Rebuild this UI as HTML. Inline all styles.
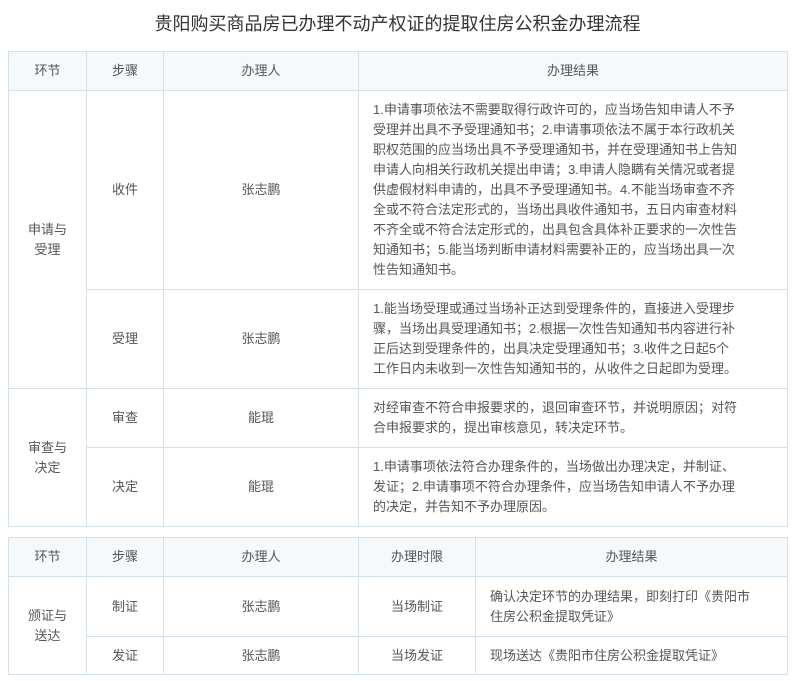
<!DOCTYPE html>
<html><head><meta charset="utf-8"><style>
body{margin:0;width:795px;height:681px;background:#fff;font-family:"Liberation Sans","Noto Sans CJK SC",sans-serif;color:#555;font-size:13px;position:relative;overflow:hidden}
.t{position:absolute;left:0;width:795px;top:11px;text-align:center;font-size:18px;color:#333;line-height:26px}
.c{position:absolute;box-sizing:border-box;border:1px solid #d5e1ea;display:flex;align-items:center;justify-content:center;text-align:center;line-height:20px;margin:0 -1px -1px 0}
.h{background:#f6f9fc}
.l{justify-content:flex-start;text-align:left;padding:0 14px}
</style></head><body>
<div class="t">贵阳购买商品房已办理不动产权证的提取住房公积金办理流程</div>

<div class="c h" style="left:8px;top:51px;width:79px;height:40px">环节</div>
<div class="c h" style="left:86px;top:51px;width:78px;height:40px">步骤</div>
<div class="c h" style="left:163px;top:51px;width:196px;height:40px">办理人</div>
<div class="c h" style="left:358px;top:51px;width:430px;height:40px">办理结果</div>

<div class="c" style="left:8px;top:90px;width:79px;height:299px">申请与<br>受理</div>
<div class="c" style="left:86px;top:90px;width:78px;height:200px">收件</div>
<div class="c" style="left:163px;top:90px;width:196px;height:200px">张志鹏</div>
<div class="c l" style="left:358px;top:90px;width:430px;height:200px">1.申请事项依法不需要取得行政许可的，应当场告知申请人不予<br>受理并出具不予受理通知书；2.申请事项依法不属于本行政机关<br>职权范围的应当场出具不予受理通知书，并在受理通知书上告知<br>申请人向相关行政机关提出申请；3.申请人隐瞒有关情况或者提<br>供虚假材料申请的，出具不予受理通知书。4.不能当场审查不齐<br>全或不符合法定形式的，当场出具收件通知书，五日内审查材料<br>不齐全或不符合法定形式的，出具包含具体补正要求的一次性告<br>知通知书；5.能当场判断申请材料需要补正的，应当场出具一次<br>性告知通知书。</div>

<div class="c" style="left:86px;top:289px;width:78px;height:100px">受理</div>
<div class="c" style="left:163px;top:289px;width:196px;height:100px">张志鹏</div>
<div class="c l" style="left:358px;top:289px;width:430px;height:100px">1.能当场受理或通过当场补正达到受理条件的，直接进入受理步<br>骤，当场出具受理通知书；2.根据一次性告知通知书内容进行补<br>正后达到受理条件的，出具决定受理通知书；3.收件之日起5个<br>工作日内未收到一次性告知通知书的，从收件之日起即为受理。</div>

<div class="c" style="left:8px;top:388px;width:79px;height:139px">审查与<br>决定</div>
<div class="c" style="left:86px;top:388px;width:78px;height:60px">审查</div>
<div class="c" style="left:163px;top:388px;width:196px;height:60px">能琨</div>
<div class="c l" style="left:358px;top:388px;width:430px;height:60px">对经审查不符合申报要求的，退回审查环节，并说明原因；对符<br>合申报要求的，提出审核意见，转决定环节。</div>
<div class="c" style="left:86px;top:447px;width:78px;height:80px">决定</div>
<div class="c" style="left:163px;top:447px;width:196px;height:80px">能琨</div>
<div class="c l" style="left:358px;top:447px;width:430px;height:80px">1.申请事项依法符合办理条件的，当场做出办理决定，并制证、<br>发证；2.申请事项不符合办理条件，应当场告知申请人不予办理<br>的决定，并告知不予办理原因。</div>

<div class="c h" style="left:8px;top:537px;width:79px;height:40px">环节</div>
<div class="c h" style="left:86px;top:537px;width:78px;height:40px">步骤</div>
<div class="c h" style="left:163px;top:537px;width:196px;height:40px">办理人</div>
<div class="c h" style="left:358px;top:537px;width:118px;height:40px">办理时限</div>
<div class="c h" style="left:475px;top:537px;width:313px;height:40px">办理结果</div>

<div class="c" style="left:8px;top:576px;width:79px;height:99px">颁证与<br>送达</div>
<div class="c" style="left:86px;top:576px;width:78px;height:61px">制证</div>
<div class="c" style="left:163px;top:576px;width:196px;height:61px">张志鹏</div>
<div class="c" style="left:358px;top:576px;width:118px;height:61px">当场制证</div>
<div class="c l" style="left:475px;top:576px;width:313px;height:61px">确认决定环节的办理结果，即刻打印《贵阳市<br>住房公积金提取凭证》</div>
<div class="c" style="left:86px;top:636px;width:78px;height:39px">发证</div>
<div class="c" style="left:163px;top:636px;width:196px;height:39px">张志鹏</div>
<div class="c" style="left:358px;top:636px;width:118px;height:39px">当场发证</div>
<div class="c l" style="left:475px;top:636px;width:313px;height:39px">现场送达《贵阳市住房公积金提取凭证》</div>
</body></html>
